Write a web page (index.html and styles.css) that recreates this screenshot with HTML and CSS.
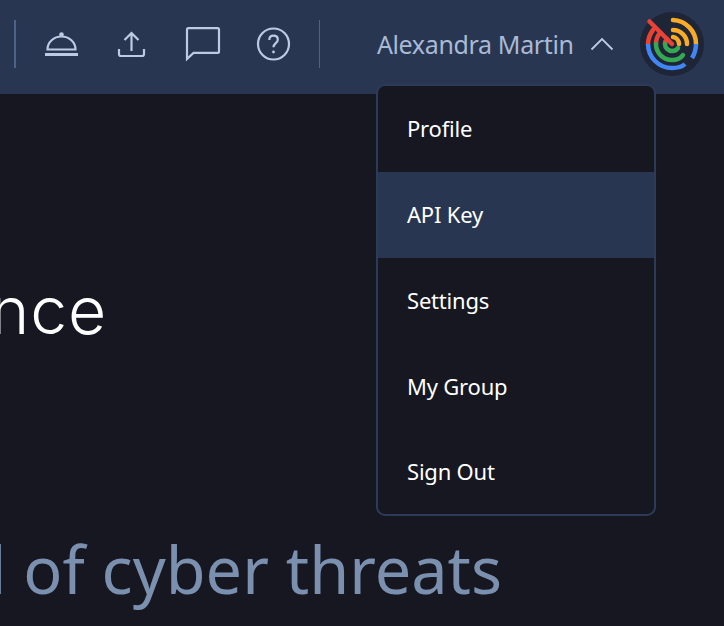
FILE: index.html
```html
<!DOCTYPE html>
<html lang="en">
  <head>
    <meta charset="UTF-8" />
    <title>Threat Intelligence</title>
    <link rel="stylesheet" href="styles.css">
  </head>
  <body>
    <header class="topbar">
      <span class="divider first"></span>
      <nav class="icons">
        <svg class="icon" viewBox="0 0 36 36" width="36" height="36">
          <path d="M3.500 23.500c0-7.300 6.300-13 14-13s14 5.700 14 13z" />
          <path d="M1 28.500h33" stroke-width="3" />
          <circle class="dot" cx="17.500" cy="8.500" r="2.300" />
        </svg>
        <svg class="icon" viewBox="0 0 36 36" width="36" height="36">
          <path d="M17.500 25V7M10.500 14l7-7 7 7" />
          <path d="M5 23v5c0 1.400.8 2 2 2h21c1.200 0 2-.6 2-2v-5" />
        </svg>
        <svg class="icon" viewBox="0 0 36 36" width="36" height="36">
          <path d="M2 3.500c0-.8.6-1.400 1.400-1.400h29.200c.8 0 1.400.6 1.400 1.400v22c0 .8-.6 1.400-1.400 1.400H8.500L2 33z" />
        </svg>
        <svg class="icon" viewBox="0 0 36 36" width="36" height="36">
          <circle cx="18.500" cy="18" r="15.500" />
          <path d="M14.300 14c0-2.700 1.800-4.300 4.300-4.300s4.200 1.600 4.200 4c0 3.400-4.300 3.600-4.300 7.500" />
          <circle class="dot" cx="18.500" cy="26" r="1.400" />
        </svg>
      </nav>
      <span class="divider"></span>
      <div class="user">
        <span class="user-name">Alexandra Martin</span>
        <svg class="chevron" viewBox="0 0 24 14" width="24" height="14">
          <path d="M1.500 12.500 12 2l10.500 10.500" />
        </svg>
      </div>
      <svg class="avatar" viewBox="0 0 64 64" width="64" height="64">
        <circle cx="32" cy="32" r="32" fill="#1e2536" />
        <g fill="none" stroke-width="4.500" stroke-linecap="round">
          <path stroke="#f9ab26" d="M33 8a24 24 0 0 1 23 24M33 18a14 14 0 0 1 14 14M33 25a7 7 0 0 1 6 7" />
          <path stroke="#ea4335" d="M8 32A24 24 0 0 1 13 18M16 32a16 16 0 0 1 4-11M25 32a7 7 0 0 1 2-5" />
          <path stroke="#4285f4" d="M8 32a24 24 0 0 0 24 24c5 0 10-1 13-4M56 32c0 5-1 9-4 14" stroke-linecap="butt" />
          <path stroke="#34a853" d="M16 32a16 16 0 0 0 16 16c5 0 9-2 11-5M25 32a7 7 0 0 0 7 7c3 0 5-1 6-3" />
          <path stroke="#ea4335" d="M9.500 9.500 32 32" />
        </g>
      </svg>
    </header>

    <main class="content">
      <h1 class="hero-title"><span>Threat Intelligence</span></h1>
      <p class="hero-text"><span>Stay ahead of cyber threats</span></p>
    </main>

    <ul class="menu">
      <li class="menu-item">Profile</li>
      <li class="menu-item active">API Key</li>
      <li class="menu-item">Settings</li>
      <li class="menu-item">My Group</li>
      <li class="menu-item">Sign Out</li>
    </ul>
  </body>
</html>
```

FILE: styles.css
```css
* {
  box-sizing: border-box;
  margin: 0;
  padding: 0;
}

html,
body {
  height: 100%;
  overflow: hidden;
}

body {
  background-color: #161721;
  font-family: "Noto Sans", "Open Sans", sans-serif;
}

.topbar {
  display: flex;
  align-items: center;
  height: 94px;
  padding-left: 14px;
  padding-bottom: 6px;
  background-color: #283651;
}

.divider {
  width: 1px;
  height: 48px;
  background-color: #4d6288;
}

.divider.first {
  width: 2px;
}

.icons {
  display: flex;
  align-items: center;
  gap: 34.300px;
  margin: 0 28px;
}

.icon {
  fill: none;
  stroke: #bccbe2;
  stroke-width: 2.200;
}

.icon .dot {
  fill: #bccbe2;
  stroke: none;
}

.user {
  display: flex;
  align-items: center;
  gap: 16px;
  margin-left: 57px;
  color: #a9bad6;
}

.user-name {
  font-size: 25px;
  letter-spacing: -0.350px;
  white-space: nowrap;
}

.chevron {
  fill: none;
  stroke: #bccbe2;
  stroke-width: 1.800;
}

.avatar {
  margin-left: 26px;
  flex-shrink: 0;
}

.content {
  display: flex;
  flex-direction: column;
  width: 502px;
}

.hero-title,
.hero-text {
  display: flex;
  justify-content: flex-end;
  white-space: nowrap;
}

.hero-title {
  width: 107px;
  margin-top: 176px;
  color: #fff;
  font-family: Inter, sans-serif;
  font-size: 66px;
  font-weight: 350;
  letter-spacing: 0.800px;
  line-height: 80px;
}

.hero-text {
  margin-top: 179px;
  color: #7b8fae;
  font-size: 64.800px;
  line-height: 80px;
}

.menu {
  position: absolute;
  top: 84px;
  left: 376px;
  width: 280px;
  list-style: none;
  background-color: #161721;
  border: 2px solid #2d3b59;
  border-radius: 9px;
}

.menu-item {
  display: flex;
  align-items: center;
  height: 86px;
  padding-left: 29px;
  padding-bottom: 3px;
  color: #fff;
  font-size: 22px;
  letter-spacing: -0.200px;
}

.menu-item:last-child {
  height: 84px;
}

.menu-item.active {
  background-color: #283651;
}
```
